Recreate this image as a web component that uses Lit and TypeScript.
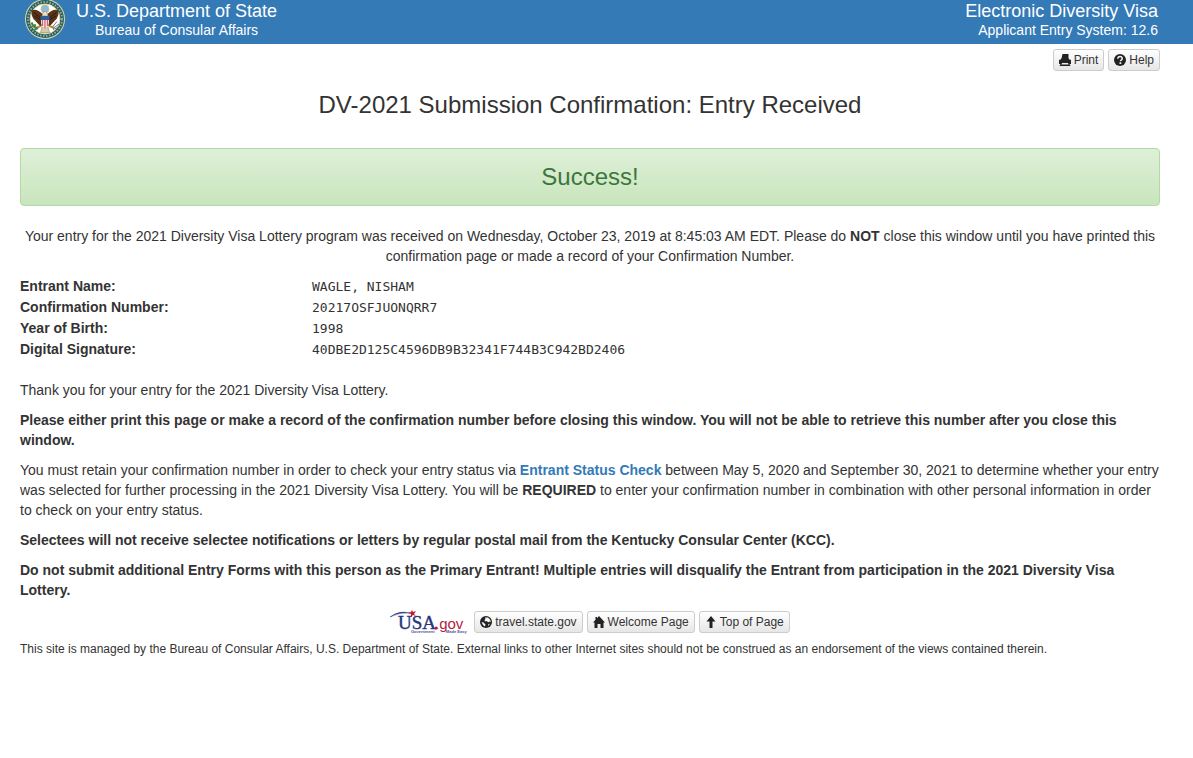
import { LitElement, html, css, svg } from "lit";
import { customElement } from "lit/decorators.js";

const icon = (shape: unknown) =>
  html`<svg class="icon" viewBox="0 0 24 24" aria-hidden="true">${shape}</svg>`;

const icons = {
  print: icon(svg`<path fill-rule="evenodd" d="M7 0h12v9h1v2h2q2 0 2 2v6q0 1-1 1h-2l2 4H1l2-4H1q-1 0-1-1v-6q0-2 2-2h2V9h1zM6 18l-1 3h14l-1-3z"/>`),
  help: icon(svg`<circle cx="12" cy="12" r="12"/><path d="M7.500 9.500Q8 5 12 5t4.500 4q0 2-2.500 3.500-1 .7-1 2" fill="none" stroke="#f4f4f4" stroke-width="3"/><path d="M11 16.500h3.500V20H11z" fill="#f4f4f4"/>`),
  globe: icon(svg`<circle cx="12" cy="12" r="12"/><path fill="#f8f8f8" d="M10 3l6 0 4 4 2 5-3-1-3 2-2-3-4 1-1-3 2-2zM3 12l4 1 4 4-1 4-4-3zM16 17l4-2-3 5z"/>`),
  home: icon(svg`<path d="M12 0l12 13h-3v11h-6v-8H9v8H3V13H0L5 7.500V2h3v2.500z"/>`),
  up: icon(svg`<path d="M12 0l9 11h-6v13H9V11H3z"/>`),
};

const seal = html`
  <svg class="seal" viewBox="0 0 80 80" role="img" aria-label="Department of State seal">
    <circle cx="40" cy="40" r="40" fill="#d9d8a0" />
    <circle cx="40" cy="40" r="38" fill="#265d66" />
    <circle cx="40" cy="40" r="34" fill="none" stroke="#8fae94" stroke-width="4" stroke-dasharray="3 3" />
    <circle cx="40" cy="40" r="30" fill="#fff" stroke="#d9d8a0" stroke-width="2" />
    <circle cx="40" cy="20" r="8" fill="#8dbbe0" stroke="#d6c26c" stroke-width="1.500" />
    <path d="M35 30C28 23 20 19 13 23q-1 13 7 20l12 13 5-11zM45 30c7-7 15-11 22-7q1 13-7 20L48 56l-5-11z" fill="#5c3219" />
    <path d="M17 27l15 11M18 34l14 8M63 27L48 38M62 34l-14 8" stroke="#2f1c12" stroke-width="2" />
    <path d="M36 27q4-5 8 0l2 7H34z" fill="#e9dfcc" stroke="#8b6b48" />
    <path d="M34 56l-3 11h18l-3-11z" fill="#d8c9ae" stroke="#8b6b48" />
    <path d="M32 36h16v12q-2 9-8 11-6-2-8-11z" fill="#eee" />
    <path d="M35 41v13M40 41v18M45 41v13" stroke="#d0606a" stroke-width="2.500" />
    <path d="M31 34h18v8H31z" fill="#315e99" />
    <path d="M31 54l-9 4M49 54l9 4" stroke="#b98c31" stroke-width="4" />
    <path d="M13 47q5 12 13 12M14 54l8-2M19 62l7-4" fill="none" stroke="#498447" stroke-width="4" />
    <path d="M56 59l12-9M56 61l12-5M55 56l9-11" stroke="#777" stroke-width="2" />
  </svg>
`;

const usaGov = html`
  <svg class="usa-logo" viewBox="0 0 80 24" role="img" aria-label="USA.gov, Government Made Easy">
    <path d="M0 7Q9 0 20 3Q10 2 0 7z" fill="#26377b" stroke="#26377b" stroke-width=".4" />
    <path d="M22 0l1 2 3-1-2 3 2 2-3-1-2 2v-3l-3-1 3-1z" fill="#c9173a" />
    <text class="usa-name" x="8" y="19">USA</text>
    <circle cx="46" cy="18" r="1.500" fill="#b51b43" />
    <text class="usa-tld" x="45" y="19">.gov</text>
    <text class="usa-tag" x="21" y="23">Government</text>
    <text class="usa-tag" x="56" y="23">Made Easy</text>
  </svg>
`;

@customElement("app-root")
export class AppRoot extends LitElement {
  static styles = css`
    :host {
      display: block;
      min-height: 100vh;
      background: #fff;
      color: #333;
      font: 14px/20px "Liberation Sans", Arial, sans-serif;
    }
    .banner {
      display: flex;
      justify-content: space-between;
      align-items: flex-start;
      height: 44px;
      overflow: hidden;
      padding: 0 35px 0 25px;
      box-sizing: border-box;
      background: #337ab7;
      color: #fff;
    }
    .brand {
      display: flex;
      gap: 11px;
    }
    .seal {
      width: 40px;
      height: 40px;
      margin-top: -1px;
    }
    .names {
      text-align: center;
    }
    .system {
      text-align: right;
    }
    .large {
      font-size: 18px;
      line-height: 22px;
    }
    .small {
      line-height: 16px;
    }
    .page {
      padding: 5px 33px 0 20px;
    }
    .tools {
      display: flex;
      justify-content: flex-end;
      gap: 4px;
    }
    .btn {
      display: inline-flex;
      align-items: center;
      gap: 3px;
      box-sizing: border-box;
      height: 22px;
      padding: 0 5px;
      border: 1px solid #ccc;
      border-radius: 3px;
      background: linear-gradient(#fff, #e6e6e6);
      color: #333;
      font: 12px/18px "Liberation Sans", Arial, sans-serif;
      text-decoration: none;
      white-space: nowrap;
      cursor: pointer;
    }
    .icon {
      width: 12px;
      height: 12px;
      flex: none;
      fill: #222;
    }
    h1 {
      margin: 21px 0 30px;
      font-size: 24px;
      line-height: 26px;
      font-weight: 400;
      text-align: center;
    }
    .alert {
      padding: 15px;
      border: 1px solid #b2dba1;
      border-radius: 4px;
      background: linear-gradient(#dff0d8, #c8e5bc);
      color: #3c763d;
      font-size: 24px;
      line-height: 26px;
      text-align: center;
    }
    p {
      margin: 0 0 10px;
    }
    .intro {
      margin-top: 20px;
      text-align: center;
    }
    dl {
      display: grid;
      grid-template-columns: 292px 1fr;
      line-height: 21px;
      margin: 0 0 20px;
    }
    dt {
      font-weight: 700;
    }
    dd {
      margin: 0;
      font-family: "DejaVu Sans Mono", monospace;
      font-size: 13px;
    }
    .status {
      color: #337ab7;
      font-weight: 700;
      text-decoration: none;
    }
    .links {
      display: flex;
      justify-content: center;
      align-items: center;
      gap: 4px;
    }
    .usa {
      display: flex;
    }
    .usa-logo {
      width: 80px;
      height: 24px;
      overflow: visible;
    }
    .usa-name {
      font: 19px "Liberation Serif", serif;
      fill: #26377b;
      stroke: #26377b;
      stroke-width: 0.4px;
    }
    .usa-tld {
      font: 15px "Liberation Sans", sans-serif;
      fill: #b51b43;
    }
    .usa-tag {
      font: 700 4px "Liberation Sans", sans-serif;
      fill: #4a5690;
    }
    .notice {
      margin-top: 5px;
      font-size: 12px;
    }
  `;

  private details = [
    ["Entrant Name:", "WAGLE, NISHAM"],
    ["Confirmation Number:", "20217OSFJUONQRR7"],
    ["Year of Birth:", "1998"],
    ["Digital Signature:", "40DBE2D125C4596DB9B32341F744B3C942BD2406"],
  ];

  render() {
    return html`
      <header class="banner">
        <div class="brand">
          ${seal}
          <div class="names">
            <div class="large">U.S. Department of State</div>
            <div class="small">Bureau of Consular Affairs</div>
          </div>
        </div>
        <div class="system">
          <div class="large">Electronic Diversity Visa</div>
          <div class="small">Applicant Entry System: 12.6</div>
        </div>
      </header>
      <main class="page">
        <div class="tools">
          <button class="btn" type="button" @click=${() => window.print()}>${icons.print}Print</button>
          <button class="btn" type="button">${icons.help}Help</button>
        </div>
        <h1>DV-2021 Submission Confirmation: Entry Received</h1>
        <div class="alert" role="status">Success!</div>
        <p class="intro">
          Your entry for the 2021 Diversity Visa Lottery program was received on Wednesday, October 23, 2019 at
          8:45:03 AM EDT. Please do <b>NOT</b> close this window until you have printed this confirmation page or
          made a record of your Confirmation Number.
        </p>
        <dl>
          ${this.details.map(([label, value]) => html`<dt>${label}</dt><dd>${value}</dd>`)}
        </dl>
        <p>Thank you for your entry for the 2021 Diversity Visa Lottery.</p>
        <p>
          <b>Please either print this page or make a record of the confirmation number before closing this window.
          You will not be able to retrieve this number after you close this window.</b>
        </p>
        <p>
          You must retain your confirmation number in order to check your entry status via
          <a class="status" href="#">Entrant Status Check</a> between May 5, 2020 and September 30, 2021 to
          determine whether your entry was selected for further processing in the 2021 Diversity Visa Lottery. You
          will be <b>REQUIRED</b> to enter your confirmation number in combination with other personal information
          in order to check on your entry status.
        </p>
        <p>
          <b>Selectees will not receive selectee notifications or letters by regular postal mail from the Kentucky
          Consular Center (KCC).</b>
        </p>
        <p>
          <b>Do not submit additional Entry Forms with this person as the Primary Entrant! Multiple entries will
          disqualify the Entrant from participation in the 2021 Diversity Visa Lottery.</b>
        </p>
        <nav class="links">
          <a class="usa" href="#">${usaGov}</a>
          <a class="btn" href="#">${icons.globe}travel.state.gov</a>
          <a class="btn" href="#">${icons.home}Welcome Page</a>
          <a class="btn" href="#">${icons.up}Top of Page</a>
        </nav>
        <p class="notice">
          This site is managed by the Bureau of Consular Affairs, U.S. Department of State. External links to other
          Internet sites should not be construed as an endorsement of the views contained therein.
        </p>
      </main>
    `;
  }
}
